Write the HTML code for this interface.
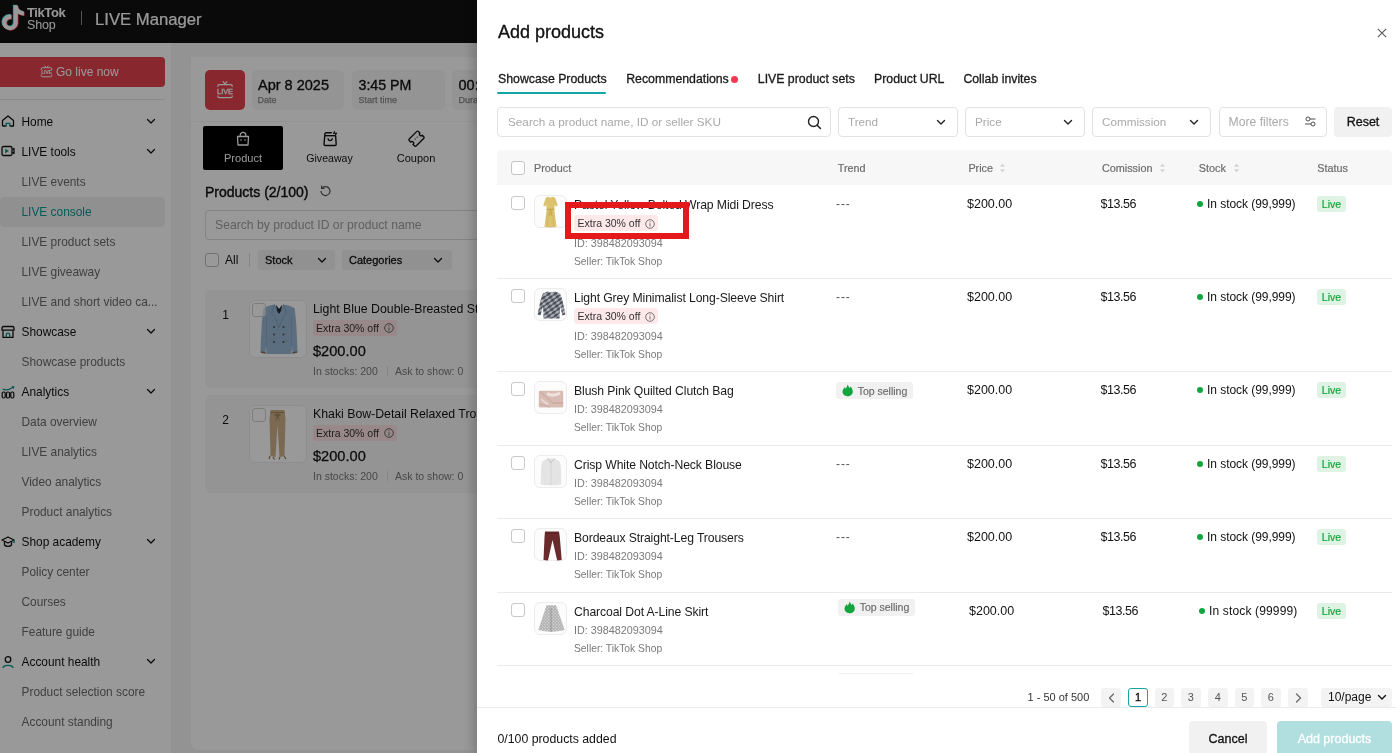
<!DOCTYPE html>
<html><head><meta charset="utf-8">
<style>
*{box-sizing:border-box;margin:0;padding:0}
html,body{width:1396px;height:753px;overflow:hidden;background:#f5f5f5;font-family:"Liberation Sans",sans-serif;color:#121212}
body{will-change:transform}
.a{position:absolute;white-space:nowrap}
.m{-webkit-text-stroke:0.25px currentColor}
.cb{position:absolute;width:14px;height:14px;border:1px solid #c8c8c8;border-radius:3px;background:#fff}
</style></head><body>
<div class="a" style="left:0px;top:0px;width:1396px;height:43px;background:#121212"></div><svg class="a" style="left:0px;top:4px;" width="26" height="28" viewBox="0 0 26 28" fill="none"><g transform="translate(0.6,1.2) scale(1.04)">
<path d="M12.525.02c1.31-.02 2.61-.01 3.91-.02.08 1.53.63 3.09 1.75 4.17 1.12 1.11 2.7 1.62 4.24 1.79v4.03c-1.44-.05-2.89-.35-4.2-.97-.57-.26-1.1-.59-1.62-.93-.01 2.92.01 5.840-.02 8.75-.08 1.4-.54 2.79-1.35 3.94-1.31 1.92-3.58 3.17-5.91 3.21-1.43.08-2.86-.31-4.08-1.03-2.020-1.19-3.440-3.370-3.650-5.710-.02-.5-.03-1-.01-1.49.18-1.9 1.12-3.72 2.58-4.96 1.66-1.44 3.98-2.13 6.15-1.72.02 1.48-.04 2.96-.04 4.44-.99-.32-2.15-.23-3.02.37-.63.41-1.11 1.04-1.36 1.75-.21.51-.15 1.07-.14 1.61.24 1.64 1.82 3.02 3.5 2.87 1.12-.01 2.19-.66 2.77-1.61.19-.33.4-.67.41-1.06.1-1.79.06-3.57.07-5.36.01-4.03-.01-8.05.02-12.07z" fill="#25f4ee" transform="translate(-0.7,-0.5)"/>
<path d="M12.525.02c1.31-.02 2.61-.01 3.91-.02.08 1.53.63 3.09 1.75 4.17 1.12 1.11 2.7 1.62 4.24 1.79v4.03c-1.44-.05-2.89-.35-4.2-.97-.57-.26-1.1-.59-1.62-.93-.01 2.92.01 5.840-.02 8.75-.08 1.4-.54 2.79-1.35 3.94-1.31 1.92-3.58 3.17-5.91 3.21-1.43.08-2.86-.31-4.08-1.03-2.020-1.19-3.440-3.370-3.650-5.710-.02-.5-.03-1-.01-1.49.18-1.9 1.12-3.72 2.58-4.96 1.66-1.44 3.98-2.13 6.15-1.72.02 1.48-.04 2.96-.04 4.44-.99-.32-2.15-.23-3.02.37-.63.41-1.11 1.04-1.36 1.75-.21.51-.15 1.07-.14 1.61.24 1.64 1.82 3.02 3.5 2.87 1.12-.01 2.19-.66 2.77-1.61.19-.33.4-.67.41-1.06.1-1.79.06-3.57.07-5.36.01-4.03-.01-8.05.02-12.07z" fill="#fe2c55" transform="translate(0.7,0.5)"/>
<path d="M12.525.02c1.31-.02 2.61-.01 3.91-.02.08 1.53.63 3.09 1.75 4.17 1.12 1.11 2.7 1.62 4.24 1.79v4.03c-1.44-.05-2.89-.35-4.2-.97-.57-.26-1.1-.59-1.62-.93-.01 2.92.01 5.840-.02 8.75-.08 1.4-.54 2.79-1.35 3.94-1.31 1.92-3.58 3.17-5.91 3.21-1.43.08-2.86-.31-4.08-1.03-2.020-1.19-3.440-3.370-3.650-5.710-.02-.5-.03-1-.01-1.49.18-1.9 1.12-3.72 2.58-4.96 1.66-1.44 3.98-2.13 6.15-1.72.02 1.48-.04 2.96-.04 4.44-.99-.32-2.15-.23-3.02.37-.63.41-1.11 1.04-1.36 1.75-.21.51-.15 1.07-.14 1.61.24 1.64 1.82 3.02 3.5 2.87 1.12-.01 2.19-.66 2.77-1.61.19-.33.4-.67.41-1.06.1-1.79.06-3.57.07-5.36.01-4.03-.01-8.05.02-12.07z" fill="#ffffff"/></g></svg><div class="a" style="left:27px;top:3.00px;height:20px;line-height:20px;font-size:13px;color:#fff;font-weight:bold;letter-spacing:-0.4px">TikTok</div><div class="a" style="left:27px;top:14.90px;height:20px;line-height:20px;font-size:12.5px;color:#fff;letter-spacing:-0.2px">Shop</div><div class="a" style="left:81px;top:11px;width:1px;height:14px;background:#8a8a8a"></div><div class="a" style="left:95px;top:9.70px;height:20px;line-height:20px;font-size:16.7px;color:#fff;-webkit-text-stroke:0.2px #fff">LIVE Manager</div><div class="a" style="left:0px;top:43px;width:171px;height:710px;background:#fff"></div><div class="a" style="left:-6px;top:56.5px;width:171px;height:30px;background:#e5424f;border-radius:4px"></div><svg class="a" style="left:39.5px;top:65px;" width="13" height="13" viewBox="0 0 13 13" fill="none"><g stroke="#fff" stroke-width="1" fill="none">
<path d="M4.5 0.8 L6.5 2.5 L8.5 0.8"/><path d="M1.2 5 V4.2 A1.5 1.5 0 0 1 2.7 2.7 H10.3 A1.5 1.5 0 0 1 11.8 4.2 V5 M1.2 9.5 V10.3 A1.5 1.5 0 0 0 2.7 11.8 H10.3 A1.5 1.5 0 0 0 11.8 10.3 V9.5"/>
</g><text x="6.5" y="9.3" font-size="5.2" font-weight="bold" fill="#fff" text-anchor="middle" font-family="Liberation Sans" letter-spacing="-0.2">LIVE</text></svg><div class="a" style="left:56px;top:61.50px;height:20px;line-height:20px;font-size:12px;color:#fff">Go live now</div><div class="a" style="left:0px;top:99px;width:165px;height:1px;background:#e6e6e6"></div><div class="a" style="left:21.5px;top:111.70px;height:20px;line-height:20px;font-size:11.9px;color:#121212">Home</div><svg class="a" style="left:146px;top:118.2px;" width="10" height="7" viewBox="0 0 10 7" fill="none"><path d="M1.5 1.5 L5 5 L8.5 1.5" stroke="#121212" stroke-width="1.3" stroke-linecap="round" stroke-linejoin="round"/></svg><svg class="a" style="left:1px;top:114.7px;" width="14" height="14" viewBox="0 0 14 14" fill="none"><path d="M1.5 11 V5.5 L7 1 L12.5 5.5 V11 H9 M5 11 H1.5" stroke="#121212" stroke-width="1.3" stroke-linejoin="round"/><path d="M5.2 11.5 V8.3 H8.8 V11.5" stroke="#0b8f8a" stroke-width="1.3"/></svg><div class="a" style="left:21.5px;top:141.70px;height:20px;line-height:20px;font-size:11.9px;color:#121212">LIVE tools</div><svg class="a" style="left:146px;top:148.2px;" width="10" height="7" viewBox="0 0 10 7" fill="none"><path d="M1.5 1.5 L5 5 L8.5 1.5" stroke="#121212" stroke-width="1.3" stroke-linecap="round" stroke-linejoin="round"/></svg><svg class="a" style="left:1px;top:144.7px;" width="14" height="14" viewBox="0 0 14 14" fill="none"><rect x="1" y="1.5" width="10" height="9" rx="1.5" stroke="#121212" stroke-width="1.3"/><path d="M11 4.5 L13 3.5 V8.5 L11 7.5" stroke="#121212" stroke-width="1.3" stroke-linejoin="round"/><path d="M4.2 3.8 L8 6 L4.2 8.2 Z" fill="#0b8f8a"/></svg><div class="a" style="left:21.5px;top:171.70px;height:20px;line-height:20px;font-size:11.9px;color:#6b6b6b">LIVE events</div><div class="a" style="left:0px;top:196.7px;width:165px;height:30px;background:#f0f0f0;border-radius:4px"></div><div class="a" style="left:21.5px;top:201.70px;height:20px;line-height:20px;font-size:11.9px;color:#0a9a94">LIVE console</div><div class="a" style="left:21.5px;top:231.70px;height:20px;line-height:20px;font-size:11.9px;color:#6b6b6b">LIVE product sets</div><div class="a" style="left:21.5px;top:261.70px;height:20px;line-height:20px;font-size:11.9px;color:#6b6b6b">LIVE giveaway</div><div class="a" style="left:21.5px;top:291.70px;height:20px;line-height:20px;font-size:11.9px;color:#6b6b6b">LIVE and short video ca...</div><div class="a" style="left:21.5px;top:321.70px;height:20px;line-height:20px;font-size:11.9px;color:#121212">Showcase</div><svg class="a" style="left:146px;top:328.2px;" width="10" height="7" viewBox="0 0 10 7" fill="none"><path d="M1.5 1.5 L5 5 L8.5 1.5" stroke="#121212" stroke-width="1.3" stroke-linecap="round" stroke-linejoin="round"/></svg><svg class="a" style="left:1px;top:324.7px;" width="14" height="14" viewBox="0 0 14 14" fill="none"><path d="M2 5.5 V12.3 H12 V5.5" stroke="#121212" stroke-width="1.3"/><path d="M2.5 1.5 H11.5 Q13 1.5 13 3 V5.2 H1 V3 Q1 1.5 2.5 1.5 Z" stroke="#121212" stroke-width="1.3" stroke-linejoin="round"/><path d="M5.3 12.3 V9.8 A1.7 1.7 0 0 1 8.7 9.8 V12.3" stroke="#0b8f8a" stroke-width="1.3"/></svg><div class="a" style="left:21.5px;top:351.70px;height:20px;line-height:20px;font-size:11.9px;color:#6b6b6b">Showcase products</div><div class="a" style="left:21.5px;top:381.70px;height:20px;line-height:20px;font-size:11.9px;color:#121212">Analytics</div><svg class="a" style="left:146px;top:388.2px;" width="10" height="7" viewBox="0 0 10 7" fill="none"><path d="M1.5 1.5 L5 5 L8.5 1.5" stroke="#121212" stroke-width="1.3" stroke-linecap="round" stroke-linejoin="round"/></svg><svg class="a" style="left:1px;top:384.7px;" width="14" height="14" viewBox="0 0 14 14" fill="none"><path d="M1.5 4 C5 6 8 5 12.5 2" stroke="#0b8f8a" stroke-width="1.3"/><path d="M11 1.3 L12.8 1.8 L12.3 3.6" stroke="#0b8f8a" stroke-width="1.1"/><rect x="1.2" y="7" width="3" height="6" rx="1.2" stroke="#121212" stroke-width="1.2"/><rect x="5.5" y="7" width="3" height="6" rx="1.2" stroke="#121212" stroke-width="1.2"/><rect x="9.8" y="7" width="3" height="6" rx="1.2" stroke="#121212" stroke-width="1.2"/></svg><div class="a" style="left:21.5px;top:411.70px;height:20px;line-height:20px;font-size:11.9px;color:#6b6b6b">Data overview</div><div class="a" style="left:21.5px;top:441.70px;height:20px;line-height:20px;font-size:11.9px;color:#6b6b6b">LIVE analytics</div><div class="a" style="left:21.5px;top:471.70px;height:20px;line-height:20px;font-size:11.9px;color:#6b6b6b">Video analytics</div><div class="a" style="left:21.5px;top:501.70px;height:20px;line-height:20px;font-size:11.9px;color:#6b6b6b">Product analytics</div><div class="a" style="left:21.5px;top:531.70px;height:20px;line-height:20px;font-size:11.9px;color:#121212">Shop academy</div><svg class="a" style="left:146px;top:538.2px;" width="10" height="7" viewBox="0 0 10 7" fill="none"><path d="M1.5 1.5 L5 5 L8.5 1.5" stroke="#121212" stroke-width="1.3" stroke-linecap="round" stroke-linejoin="round"/></svg><svg class="a" style="left:1px;top:534.7px;" width="14" height="14" viewBox="0 0 14 14" fill="none"><path d="M1 5 L7 2 L13 5 L7 8 Z" stroke="#121212" stroke-width="1.3" stroke-linejoin="round"/><path d="M3.5 6.5 V10 C5 11.8 9 11.8 10.5 10 V6.5" stroke="#121212" stroke-width="1.3"/><path d="M13 5 V8" stroke="#0b8f8a" stroke-width="1.5"/></svg><div class="a" style="left:21.5px;top:561.70px;height:20px;line-height:20px;font-size:11.9px;color:#6b6b6b">Policy center</div><div class="a" style="left:21.5px;top:591.70px;height:20px;line-height:20px;font-size:11.9px;color:#6b6b6b">Courses</div><div class="a" style="left:21.5px;top:621.70px;height:20px;line-height:20px;font-size:11.9px;color:#6b6b6b">Feature guide</div><div class="a" style="left:21.5px;top:651.70px;height:20px;line-height:20px;font-size:11.9px;color:#121212">Account health</div><svg class="a" style="left:146px;top:658.2px;" width="10" height="7" viewBox="0 0 10 7" fill="none"><path d="M1.5 1.5 L5 5 L8.5 1.5" stroke="#121212" stroke-width="1.3" stroke-linecap="round" stroke-linejoin="round"/></svg><svg class="a" style="left:1px;top:654.7px;" width="14" height="14" viewBox="0 0 14 14" fill="none"><circle cx="7" cy="4.5" r="2.8" stroke="#121212" stroke-width="1.3"/><path d="M2 13 C2.5 9.5 11.5 9.5 12 13" stroke="#0b8f8a" stroke-width="1.4"/></svg><div class="a" style="left:21.5px;top:681.70px;height:20px;line-height:20px;font-size:11.9px;color:#6b6b6b">Product selection score</div><div class="a" style="left:21.5px;top:711.70px;height:20px;line-height:20px;font-size:11.9px;color:#6b6b6b">Account standing</div><div class="a" style="left:171px;top:43px;width:306px;height:710px;background:#f5f5f5"></div><div class="a" style="left:191px;top:57px;width:290px;height:64px;background:#fff"></div><div class="a" style="left:205px;top:70px;width:40px;height:40px;background:#e5424f;border-radius:5px"></div><svg class="a" style="left:213px;top:78px;" width="24" height="24" viewBox="0 0 24 24" fill="none"><g stroke="#fff" stroke-width="1.25" fill="none">
<path d="M9.8 3.3 L12 5.8 L14.2 3.3"/><path d="M4.8 8.8 V8 A1.5 1.5 0 0 1 6.3 6.5 H17.7 A1.5 1.5 0 0 1 19.2 8 V8.8 M4.8 17.6 V18.2 A1.5 1.5 0 0 0 6.3 19.7 H17.7 A1.5 1.5 0 0 0 19.2 18.2 V17.6"/>
</g><text x="12" y="15.6" font-size="7.3" fill="#fff" text-anchor="middle" font-family="Liberation Sans" stroke="#fff" stroke-width="0.3">LIVE</text></svg><div class="a" style="left:252px;top:70px;width:92px;height:40px;background:#f7f7f7;border-radius:5px"></div><div class="a" style="left:258px;top:74.50px;height:20px;line-height:20px;font-size:14.5px;color:#121212;-webkit-text-stroke:0.35px #121212">Apr 8 2025</div><div class="a" style="left:257.5px;top:89.50px;height:20px;line-height:20px;font-size:9px;color:#8a8a8a;-webkit-text-stroke:0.25px #8a8a8a">Date</div><div class="a" style="left:352px;top:70px;width:93px;height:40px;background:#f7f7f7;border-radius:5px"></div><div class="a" style="left:358.5px;top:74.50px;height:20px;line-height:20px;font-size:14.2px;color:#121212;-webkit-text-stroke:0.35px #121212">3:45 PM</div><div class="a" style="left:358.5px;top:89.50px;height:20px;line-height:20px;font-size:9px;color:#8a8a8a;-webkit-text-stroke:0.25px #8a8a8a">Start time</div><div class="a" style="left:452px;top:70px;width:93px;height:40px;background:#f7f7f7;border-radius:5px"></div><div class="a" style="left:458.5px;top:74.50px;height:20px;line-height:20px;font-size:14.5px;color:#121212;-webkit-text-stroke:0.35px #121212">00:</div><div class="a" style="left:458.5px;top:89.50px;height:20px;line-height:20px;font-size:9px;color:#8a8a8a;-webkit-text-stroke:0.25px #8a8a8a">Duration</div><div class="a" style="left:191px;top:122px;width:290px;height:1px;background:#ececec"></div><div class="a" style="left:191px;top:122px;width:290px;height:51px;background:#fff"></div><div class="a" style="left:203px;top:126px;width:80px;height:44px;background:#000;border-radius:2px"></div><svg class="a" style="left:235px;top:131px;" width="16" height="16" viewBox="0 0 16 16" fill="none"><path d="M5.2 5.5 V4.2 A2.8 2.8 0 0 1 10.8 4.2 V5.5" stroke="#fff" stroke-width="1.3"/><path d="M2.5 5.5 H13.5 L13 14 H3 Z" stroke="#fff" stroke-width="1.3" stroke-linejoin="round"/><circle cx="6" cy="9" r="0.8" fill="#fff"/><circle cx="10" cy="9" r="0.8" fill="#fff"/></svg><div class="a" style="left:143.00px;width:200px;text-align:center;top:147.50px;height:20px;line-height:20px;font-size:11px;color:#fff">Product</div><svg class="a" style="left:321px;top:130px;" width="18" height="18" viewBox="0 0 18 18" fill="none"><path d="M3.8 5.5 L3 14.3 A1.2 1.2 0 0 0 4.2 15.5 H14 A1.2 1.2 0 0 0 15.2 14.3 L14.6 5.5" stroke="#121212" stroke-width="1.4" stroke-linejoin="round" fill="none"/><path d="M3.8 5.8 V4.2 A1.5 1.5 0 0 1 5.3 2.7 H10.8" stroke="#121212" stroke-width="1.4" fill="none"/><path d="M3.5 5.7 H14.8" stroke="#121212" stroke-width="1.4"/><path d="M7 8.3 C7.2 11.3 11 11.3 11.3 8.3" stroke="#121212" stroke-width="1.3" fill="none"/><path d="M13.6 1.3 L12.6 3.5 L15.6 3 L14.3 5.2" stroke="#121212" stroke-width="1.1" fill="none" stroke-linejoin="round"/></svg><div class="a" style="left:229.50px;width:200px;text-align:center;top:147.50px;height:20px;line-height:20px;font-size:10.6px;color:#121212">Giveaway</div><svg class="a" style="left:407px;top:130px;" width="18" height="18" viewBox="0 0 18 18" fill="none"><g transform="translate(9.5 8.7) rotate(-45)"><path d="M-5.1 -4.9 H5.1 A1.4 1.4 0 0 1 6.5 -3.5 V-1.7 A1.7 1.7 0 0 0 6.5 1.7 V3.5 A1.4 1.4 0 0 1 5.1 4.9 H-5.1 A1.4 1.4 0 0 1 -6.5 3.5 V1.7 A1.7 1.7 0 0 0 -6.5 -1.7 V-3.5 A1.4 1.4 0 0 1 -5.1 -4.9 Z" stroke="#121212" stroke-width="1.35" fill="none"/><circle cx="-1.2" cy="-0.6" r="0.65" fill="#121212"/><circle cx="1.6" cy="-0.6" r="0.65" fill="#121212"/></g></svg><div class="a" style="left:316.00px;width:200px;text-align:center;top:147.50px;height:20px;line-height:20px;font-size:11px;color:#121212">Coupon</div><div class="a" style="left:191px;top:173px;width:290px;height:577px;background:#fff;border-radius:0 0 0 8px"></div><div class="a" style="left:205px;top:181.50px;height:20px;line-height:20px;font-size:14px;color:#121212;-webkit-text-stroke:0.4px #121212">Products (2/100)</div><svg class="a" style="left:318px;top:184px;" width="14" height="14" viewBox="0 0 14 14" fill="none"><path d="M3 7 A4.5 4.5 0 1 0 4.4 3.8" stroke="#555" stroke-width="1.2"/><path d="M3.6 1.5 V4.3 H6.4" stroke="#555" stroke-width="1.2"/></svg><div class="a" style="left:205px;top:210px;width:290px;height:30px;background:#fff;border:1px solid #dcdcdc;border-radius:4px"></div><div class="a" style="left:215px;top:215.00px;height:20px;line-height:20px;font-size:12.2px;color:#a0a0a0">Search by product ID or product name</div><div class="cb" style="left:205px;top:253px;width:14px;height:14px;border-color:#bbb"></div><div class="a" style="left:225px;top:250.00px;height:20px;line-height:20px;font-size:12px;color:#121212">All</div><div class="a" style="left:249px;top:253px;width:1px;height:14px;background:#e0e0e0"></div><div class="a" style="left:258px;top:250px;width:77px;height:20px;background:#f2f2f2;border-radius:3px"></div><div class="a" style="left:265px;top:250.00px;height:20px;line-height:20px;font-size:11px;color:#121212;-webkit-text-stroke:0.3px #121212">Stock</div><svg class="a" style="left:317px;top:257px;" width="10" height="7" viewBox="0 0 10 7" fill="none"><path d="M1.5 1.5 L5 5 L8.5 1.5" stroke="#121212" stroke-width="1.3" stroke-linecap="round" stroke-linejoin="round"/></svg><div class="a" style="left:342px;top:250px;width:110px;height:20px;background:#f2f2f2;border-radius:3px"></div><div class="a" style="left:349px;top:250.00px;height:20px;line-height:20px;font-size:11px;color:#121212;-webkit-text-stroke:0.3px #121212">Categories</div><svg class="a" style="left:433px;top:257px;" width="10" height="7" viewBox="0 0 10 7" fill="none"><path d="M1.5 1.5 L5 5 L8.5 1.5" stroke="#121212" stroke-width="1.3" stroke-linecap="round" stroke-linejoin="round"/></svg><div class="a" style="left:205px;top:290px;width:290px;height:98px;background:#f7f7f7;border-radius:5px"></div><div class="a" style="left:215.50px;width:20px;text-align:center;top:305.00px;height:20px;line-height:20px;font-size:12px;color:#121212">1</div><div class="a" style="left:248.5px;top:300px;width:58px;height:58px;background:#fff;border:1px solid #ececec;border-radius:6px"></div><svg class="a" style="left:259.5px;top:303.5px" width="38" height="51" viewBox="0 0 38 51"><path d="M9.5 1.5 L14.5 0.5 L19 5 L23.5 0.5 L28.5 1.5 L34.5 4 Q36.5 15 37.5 48.5 L32.5 49.5 L32 42 L31.5 50 H6.5 L6 42 L5.5 49.5 L0.5 48.5 Q1.5 15 3.5 4 Z" fill="#98b8d4"/><path d="M16 0.8 L19 5 L22 0.8 L21 7 L19 10 L17 7 Z" fill="#2a2c33"/><path d="M14.5 0.5 L11.5 9 L15 13 L19 24 L23 13 L26.5 9 L23.5 0.5" stroke="#7f9cb6" stroke-width="0.8" fill="none"/><path d="M6.5 12 L6.5 42 M31.5 12 L31.5 42" stroke="#86a3bc" stroke-width="0.7"/><path d="M9.5 37 H15.5 M22.5 37 H28.5" stroke="#86a3bc" stroke-width="0.7"/><path d="M1 48 L5.5 49 M32.5 49 L37 48" stroke="#8a6a58" stroke-width="1.6"/><circle cx="14" cy="23" r="0.95" fill="#4a4a50"/><circle cx="23.5" cy="23" r="0.95" fill="#4a4a50"/><circle cx="14" cy="30.5" r="0.95" fill="#4a4a50"/><circle cx="23.5" cy="30.5" r="0.95" fill="#4a4a50"/><circle cx="14" cy="38" r="0.95" fill="#4a4a50"/><circle cx="23.5" cy="38" r="0.95" fill="#4a4a50"/></svg><div class="cb" style="left:252px;top:303px;border-color:#cfcfcf;background:rgba(255,255,255,0.6)"></div><div class="a" style="left:313px;top:298.50px;height:20px;line-height:20px;font-size:12.3px;color:#121212">Light Blue Double-Breasted Structured Blazer</div><div class="a" style="left:313px;top:320px;width:84px;height:16px;background:#fde3e6;border-radius:3px"></div><div class="a" style="left:316px;top:318.00px;height:20px;line-height:20px;font-size:10.5px;color:#333">Extra 30% off</div><svg class="a" style="left:384px;top:323px;" width="10" height="10" viewBox="0 0 10 10" fill="none"><circle cx="5" cy="5" r="4.3" stroke="#555" stroke-width="0.9"/><path d="M5 4.3 V7.5" stroke="#555" stroke-width="0.9"/><circle cx="5" cy="2.8" r="0.55" fill="#555"/></svg><div class="a" style="left:313px;top:340.50px;height:20px;line-height:20px;font-size:14.6px;color:#121212;-webkit-text-stroke:0.25px #121212">$200.00</div><div class="a" style="left:313px;top:361.00px;height:20px;line-height:20px;font-size:10.5px;color:#777">In stocks: 200</div><div class="a" style="left:387px;top:366px;width:1px;height:10px;background:#dcdcdc"></div><div class="a" style="left:395px;top:361.00px;height:20px;line-height:20px;font-size:10.5px;color:#777">Ask to show: 0</div><div class="a" style="left:205px;top:395px;width:290px;height:98px;background:#f7f7f7;border-radius:5px"></div><div class="a" style="left:215.50px;width:20px;text-align:center;top:410.00px;height:20px;line-height:20px;font-size:12px;color:#121212">2</div><div class="a" style="left:248.5px;top:405px;width:58px;height:58px;background:#fff;border:1px solid #ececec;border-radius:6px"></div><svg class="a" style="left:268px;top:409px" width="19" height="51" viewBox="0 0 19 51"><path d="M2.5 1 H16.5 L17.5 10 L16.5 47 L11.5 48 L9.5 16 L7.5 48 L2.5 47 L1.5 10 Z" fill="#cdb089"/><path d="M2.5 3.5 H16.5" stroke="#a88c62" stroke-width="1.2"/><path d="M6 6 L9.5 4 L13 6 L10.5 8 L12 13 L9.5 9 L7 13 L8.5 8 Z" fill="#a88c62"/><path d="M2 47 L1 50 M5 48 L6.5 50.5 M12 48 L11 50.5 M16 47 L18 50" stroke="#8f7048" stroke-width="1.1"/></svg><div class="cb" style="left:252px;top:408px;border-color:#cfcfcf;background:rgba(255,255,255,0.6)"></div><div class="a" style="left:313px;top:403.50px;height:20px;line-height:20px;font-size:12.3px;color:#121212">Khaki Bow-Detail Relaxed Trousers</div><div class="a" style="left:313px;top:425px;width:84px;height:16px;background:#fde3e6;border-radius:3px"></div><div class="a" style="left:316px;top:423.00px;height:20px;line-height:20px;font-size:10.5px;color:#333">Extra 30% off</div><svg class="a" style="left:384px;top:428px;" width="10" height="10" viewBox="0 0 10 10" fill="none"><circle cx="5" cy="5" r="4.3" stroke="#555" stroke-width="0.9"/><path d="M5 4.3 V7.5" stroke="#555" stroke-width="0.9"/><circle cx="5" cy="2.8" r="0.55" fill="#555"/></svg><div class="a" style="left:313px;top:445.50px;height:20px;line-height:20px;font-size:14.6px;color:#121212;-webkit-text-stroke:0.25px #121212">$200.00</div><div class="a" style="left:313px;top:466.00px;height:20px;line-height:20px;font-size:10.5px;color:#777">In stocks: 200</div><div class="a" style="left:387px;top:471px;width:1px;height:10px;background:#dcdcdc"></div><div class="a" style="left:395px;top:466.00px;height:20px;line-height:20px;font-size:10.5px;color:#777">Ask to show: 0</div><div class="a" style="left:0px;top:0px;width:1396px;height:753px;background:rgba(0,0,0,0.4)"></div><div class="a" style="left:477px;top:0px;width:919px;height:753px;background:#fff;box-shadow:-4px 0 10px rgba(0,0,0,0.2)"></div><div class="a" style="left:498px;top:22.00px;height:20px;line-height:20px;font-size:18px;color:#121212;-webkit-text-stroke:0.35px #121212">Add products</div><svg class="a" style="left:1376.5px;top:27.5px;" width="10" height="10" viewBox="0 0 10 10" fill="none"><path d="M0.8 0.8 L9.2 9.2 M9.2 0.8 L0.8 9.2" stroke="#555" stroke-width="1.05"/></svg><div class="a" style="left:498px;top:68.90px;height:20px;line-height:20px;font-size:12.3px;color:#1a1a1a;-webkit-text-stroke:0.3px #1a1a1a">Showcase Products</div><div class="a" style="left:626.2px;top:68.90px;height:20px;line-height:20px;font-size:12.3px;color:#1a1a1a;-webkit-text-stroke:0.3px #1a1a1a">Recommendations</div><div class="a" style="left:757.8px;top:68.90px;height:20px;line-height:20px;font-size:12.3px;color:#1a1a1a;-webkit-text-stroke:0.3px #1a1a1a">LIVE product sets</div><div class="a" style="left:874px;top:68.90px;height:20px;line-height:20px;font-size:12.3px;color:#1a1a1a;-webkit-text-stroke:0.3px #1a1a1a">Product URL</div><div class="a" style="left:963.4px;top:68.90px;height:20px;line-height:20px;font-size:12.3px;color:#1a1a1a;-webkit-text-stroke:0.3px #1a1a1a">Collab invites</div><div class="a" style="left:730.7px;top:75.5px;width:7px;height:7px;border-radius:50%;background:#f0384f"></div><div class="a" style="left:497px;top:91.5px;width:109px;height:2px;background:#12a6a6;border-radius:1px"></div><div class="a" style="left:497px;top:107px;width:334px;height:30px;background:#fff;border:1px solid #e2e2e2;border-radius:4px"></div><div class="a" style="left:508px;top:112.00px;height:20px;line-height:20px;font-size:11.75px;color:#a9a9a9">Search a product name, ID or seller SKU</div><svg class="a" style="left:807px;top:115px;" width="15" height="15" viewBox="0 0 15 15" fill="none"><circle cx="6.5" cy="6.5" r="5" stroke="#222" stroke-width="1.4"/><path d="M10.2 10.2 L13.5 13.5" stroke="#222" stroke-width="1.5" stroke-linecap="round"/></svg><div class="a" style="left:838px;top:107px;width:120px;height:30px;background:#fff;border:1px solid #e2e2e2;border-radius:4px"></div><div class="a" style="left:848px;top:112.00px;height:20px;line-height:20px;font-size:11.7px;color:#a9a9a9">Trend</div><svg class="a" style="left:936px;top:118.5px;" width="10" height="7" viewBox="0 0 10 7" fill="none"><path d="M1.5 1.5 L5 5 L8.5 1.5" stroke="#222" stroke-width="1.4" stroke-linecap="round" stroke-linejoin="round"/></svg><div class="a" style="left:965px;top:107px;width:120px;height:30px;background:#fff;border:1px solid #e2e2e2;border-radius:4px"></div><div class="a" style="left:975px;top:112.00px;height:20px;line-height:20px;font-size:11.7px;color:#a9a9a9">Price</div><svg class="a" style="left:1063px;top:118.5px;" width="10" height="7" viewBox="0 0 10 7" fill="none"><path d="M1.5 1.5 L5 5 L8.5 1.5" stroke="#222" stroke-width="1.4" stroke-linecap="round" stroke-linejoin="round"/></svg><div class="a" style="left:1092px;top:107px;width:119px;height:30px;background:#fff;border:1px solid #e2e2e2;border-radius:4px"></div><div class="a" style="left:1102px;top:112.00px;height:20px;line-height:20px;font-size:11.7px;color:#a9a9a9">Commission</div><svg class="a" style="left:1189px;top:118.5px;" width="10" height="7" viewBox="0 0 10 7" fill="none"><path d="M1.5 1.5 L5 5 L8.5 1.5" stroke="#222" stroke-width="1.4" stroke-linecap="round" stroke-linejoin="round"/></svg><div class="a" style="left:1219px;top:107px;width:107.5px;height:30px;background:#fff;border:1px solid #e2e2e2;border-radius:4px"></div><div class="a" style="left:1228.5px;top:112.00px;height:20px;line-height:20px;font-size:12.2px;color:#a9a9a9">More filters</div><svg class="a" style="left:1304px;top:115px;" width="13" height="13" viewBox="0 0 13 13" fill="none"><circle cx="4" cy="4" r="2" stroke="#444" stroke-width="0.95"/><path d="M6 4 H11.5" stroke="#444" stroke-width="0.95"/><circle cx="9" cy="9" r="2" stroke="#444" stroke-width="0.95"/><path d="M1 9 H7" stroke="#444" stroke-width="0.95"/></svg><div class="a" style="left:1334px;top:107px;width:58px;height:30px;background:#f1f1f1;border-radius:4px"></div><div class="a" style="left:1334.00px;width:58px;text-align:center;top:112.00px;height:20px;line-height:20px;font-size:12.5px;color:#121212;-webkit-text-stroke:0.3px #121212">Reset</div><div class="a" style="left:497px;top:150px;width:895px;height:35px;background:#f7f7f7;border-radius:4px 4px 0 0"></div><div class="cb" style="left:510.5px;top:161px;border-color:#c4c4c4"></div><div class="a" style="left:534px;top:158.00px;height:20px;line-height:20px;font-size:10.8px;color:#6d6d6d;-webkit-text-stroke:0.2px #6d6d6d">Product</div><div class="a" style="left:837.8px;top:158.00px;height:20px;line-height:20px;font-size:10.8px;color:#6d6d6d;-webkit-text-stroke:0.2px #6d6d6d">Trend</div><div class="a" style="left:968.4px;top:158.00px;height:20px;line-height:20px;font-size:10.8px;color:#6d6d6d;-webkit-text-stroke:0.2px #6d6d6d">Price</div><svg class="a" style="left:999.2px;top:163px;" width="7" height="10" viewBox="0 0 7 10" fill="none"><path d="M1 3.5 L3.5 1 L6 3.5 Z M1 6.5 L3.5 9 L6 6.5 Z" fill="#c9c9c9"/></svg><div class="a" style="left:1102px;top:158.00px;height:20px;line-height:20px;font-size:10.8px;color:#6d6d6d;-webkit-text-stroke:0.2px #6d6d6d">Comission</div><svg class="a" style="left:1158.5px;top:163px;" width="7" height="10" viewBox="0 0 7 10" fill="none"><path d="M1 3.5 L3.5 1 L6 3.5 Z M1 6.5 L3.5 9 L6 6.5 Z" fill="#c9c9c9"/></svg><div class="a" style="left:1198.8px;top:158.00px;height:20px;line-height:20px;font-size:10.8px;color:#6d6d6d;-webkit-text-stroke:0.2px #6d6d6d">Stock</div><svg class="a" style="left:1233px;top:163px;" width="7" height="10" viewBox="0 0 7 10" fill="none"><path d="M1 3.5 L3.5 1 L6 3.5 Z M1 6.5 L3.5 9 L6 6.5 Z" fill="#c9c9c9"/></svg><div class="a" style="left:1317.2px;top:158.00px;height:20px;line-height:20px;font-size:10.8px;color:#6d6d6d;-webkit-text-stroke:0.2px #6d6d6d">Status</div><div class="cb" style="left:510.5px;top:196px"></div><div class="a" style="left:534px;top:195px;width:33px;height:33px;background:#fcfcfc;border:1px solid #ececec;border-radius:6px"></div><svg class="a" style="left:542px;top:196px" width="17" height="32" viewBox="0 0 17 32"><path d="M6 0.8 Q8.5 2.2 11 0.8 L13.3 2 L15.8 9.5 L13.8 10.5 L12.8 8.5 L12.3 13.5 L14.5 30.8 Q8.5 32 2.5 30.8 L4.7 13.5 L4.2 8.5 L3.2 10.5 L1.2 9.5 L3.7 2 Z" fill="#dcc26e"/><path d="M4.7 13.3 H12.3" stroke="#bda14f" stroke-width="1.1"/><path d="M8.5 13.3 L7.4 20 M8.5 13.3 L9.8 19.5" stroke="#bda14f" stroke-width="0.9"/><path d="M6.5 15 L5.2 30 M10.5 15 L11.8 30" stroke="#cdb05a" stroke-width="0.6"/></svg><div class="a" style="left:574px;top:194.80px;height:20px;line-height:20px;font-size:12.2px;color:#1a1a1a;letter-spacing:-0.1px">Pastel Yellow Belted Wrap Midi Dress</div><div class="a" style="left:574px;top:215px;width:84px;height:16px;background:#fde8ea;border-radius:3px"></div><div class="a" style="left:577.5px;top:213.30px;height:20px;line-height:20px;font-size:10.5px;color:#333">Extra 30% off</div><svg class="a" style="left:644.5px;top:218.5px;" width="10" height="10" viewBox="0 0 10 10" fill="none"><circle cx="5" cy="5" r="4.3" stroke="#666" stroke-width="0.9"/><path d="M5 4.3 V7.5" stroke="#666" stroke-width="0.9"/><circle cx="5" cy="2.8" r="0.55" fill="#666"/></svg><div class="a" style="left:574px;top:233.00px;height:20px;line-height:20px;font-size:10.8px;color:#7a7a7a">ID: 398482093094</div><div class="a" style="left:574px;top:251.50px;height:20px;line-height:20px;font-size:10.3px;color:#7a7a7a">Seller: TikTok Shop</div><div class="a" style="left:836px;top:194.00px;height:20px;line-height:20px;font-size:12px;color:#555;letter-spacing:0.9px">---</div><div class="a" style="left:967px;top:194.00px;height:20px;line-height:20px;font-size:12.5px;color:#121212">$200.00</div><div class="a" style="left:1100.6px;top:194.00px;height:20px;line-height:20px;font-size:12.5px;color:#121212;letter-spacing:-0.45px">$13.56</div><div class="a" style="left:1196.8px;top:200.8px;width:6.4px;height:6.4px;border-radius:50%;background:#13a53d"></div><div class="a" style="left:1207px;top:194.00px;height:20px;line-height:20px;font-size:12px;color:#121212;letter-spacing:-0.05px">In stock (99,999)</div><div class="a" style="left:1317px;top:195.5px;width:29px;height:16.5px;background:#dff3e5;border-radius:3px"></div><div class="a" style="left:1317.00px;width:29px;text-align:center;top:193.80px;height:20px;line-height:20px;font-size:10.5px;color:#13a53d;-webkit-text-stroke:0.2px #13a53d">Live</div><div class="a" style="left:497px;top:278px;width:895px;height:1px;background:#ebebeb"></div><div class="cb" style="left:510.5px;top:289px"></div><div class="a" style="left:534px;top:288px;width:33px;height:33px;background:#fcfcfc;border:1px solid #ececec;border-radius:6px"></div><svg class="a" style="left:536.5px;top:291px" width="29" height="28" viewBox="0 0 29 28"><defs><pattern id="zb" width="6" height="3.6" patternUnits="userSpaceOnUse" patternTransform="rotate(-35)"><rect width="6" height="3.6" fill="#b4b7be"/><path d="M0 1 Q1.5 0 3 1 T6 1 V2.9 Q4.5 1.9 3 2.9 T0 2.9 Z" fill="#474c56"/></pattern></defs><path d="M10.5 0.5 L14.5 1.5 L18.5 0.5 L23 2.5 Q25 6 26 12 L28.5 23.5 L25.5 24.5 L23 15 L22.5 27.5 H6.5 L6 15 L3.5 24.5 L0.5 23.5 L3 12 Q4 6 6 2.5 Z" fill="url(#zb)"/></svg><div class="a" style="left:574px;top:287.80px;height:20px;line-height:20px;font-size:12.2px;color:#1a1a1a;letter-spacing:-0.1px">Light Grey Minimalist Long-Sleeve Shirt</div><div class="a" style="left:574px;top:308px;width:84px;height:16px;background:#fde8ea;border-radius:3px"></div><div class="a" style="left:577.5px;top:306.30px;height:20px;line-height:20px;font-size:10.5px;color:#333">Extra 30% off</div><svg class="a" style="left:644.5px;top:311.5px;" width="10" height="10" viewBox="0 0 10 10" fill="none"><circle cx="5" cy="5" r="4.3" stroke="#666" stroke-width="0.9"/><path d="M5 4.3 V7.5" stroke="#666" stroke-width="0.9"/><circle cx="5" cy="2.8" r="0.55" fill="#666"/></svg><div class="a" style="left:574px;top:326.00px;height:20px;line-height:20px;font-size:10.8px;color:#7a7a7a">ID: 398482093094</div><div class="a" style="left:574px;top:344.50px;height:20px;line-height:20px;font-size:10.3px;color:#7a7a7a">Seller: TikTok Shop</div><div class="a" style="left:836px;top:287.00px;height:20px;line-height:20px;font-size:12px;color:#555;letter-spacing:0.9px">---</div><div class="a" style="left:967px;top:287.00px;height:20px;line-height:20px;font-size:12.5px;color:#121212">$200.00</div><div class="a" style="left:1100.6px;top:287.00px;height:20px;line-height:20px;font-size:12.5px;color:#121212;letter-spacing:-0.45px">$13.56</div><div class="a" style="left:1196.8px;top:293.8px;width:6.4px;height:6.4px;border-radius:50%;background:#13a53d"></div><div class="a" style="left:1207px;top:287.00px;height:20px;line-height:20px;font-size:12px;color:#121212;letter-spacing:-0.05px">In stock (99,999)</div><div class="a" style="left:1317px;top:288.5px;width:29px;height:16.5px;background:#dff3e5;border-radius:3px"></div><div class="a" style="left:1317.00px;width:29px;text-align:center;top:286.80px;height:20px;line-height:20px;font-size:10.5px;color:#13a53d;-webkit-text-stroke:0.2px #13a53d">Live</div><div class="a" style="left:497px;top:371px;width:895px;height:1px;background:#ebebeb"></div><div class="cb" style="left:510.5px;top:382px"></div><div class="a" style="left:534px;top:381px;width:33px;height:33px;background:#fcfcfc;border:1px solid #ececec;border-radius:6px"></div><svg class="a" style="left:538px;top:390px" width="26" height="18" viewBox="0 0 26 18"><path d="M0.8 2 Q1 0.8 2.5 0.8 H23.5 Q25 0.8 25.2 2 L25.3 16.5 Q25 17.5 23.5 17.5 H2.5 Q1 17.5 0.8 16.5 Z" fill="#d8bcb4"/><path d="M2 1.5 L15 13 H25" stroke="#bf9c93" stroke-width="0.8" fill="none"/><path d="M9 3.5 Q15 7 22 3" stroke="#eee0dc" stroke-width="3" fill="none"/><path d="M3 9 Q6 12 10 14" stroke="#e8d6d1" stroke-width="2" fill="none"/><path d="M1 14 L12 17" stroke="#c9a9a0" stroke-width="1.2"/></svg><div class="a" style="left:574px;top:380.80px;height:20px;line-height:20px;font-size:12.2px;color:#1a1a1a;letter-spacing:-0.1px">Blush Pink Quilted Clutch Bag</div><div class="a" style="left:574px;top:399.30px;height:20px;line-height:20px;font-size:10.8px;color:#7a7a7a">ID: 398482093094</div><div class="a" style="left:574px;top:417.80px;height:20px;line-height:20px;font-size:10.3px;color:#7a7a7a">Seller: TikTok Shop</div><div class="a" style="left:836px;top:382px;width:77px;height:17px;background:#f1f1f1;border-radius:3px"></div><svg class="a" style="left:842px;top:384px;" width="11.5" height="13" viewBox="0 0 11.5 13" fill="none"><path d="M5.5 0.5 C6.2 2.2 7.2 2.8 7.6 4.2 C8 3.7 8.3 3.1 8.3 2.4 C9.8 3.8 10.8 5.6 10.8 7.4 C10.8 10.4 8.5 12.2 5.6 12.2 C2.7 12.2 0.5 10.4 0.5 7.6 C0.5 5.4 2 4.3 3 2.7 C3.3 3.5 3.4 4.2 3.2 5 C4.5 3.8 5.3 2.4 5.5 0.5 Z" fill="#13a53d"/></svg><div class="a" style="left:857.7px;top:380.50px;height:20px;line-height:20px;font-size:10.5px;color:#6a6a6a;-webkit-text-stroke:0.15px #6a6a6a">Top selling</div><div class="a" style="left:967px;top:380.00px;height:20px;line-height:20px;font-size:12.5px;color:#121212">$200.00</div><div class="a" style="left:1100.6px;top:380.00px;height:20px;line-height:20px;font-size:12.5px;color:#121212;letter-spacing:-0.45px">$13.56</div><div class="a" style="left:1196.8px;top:386.8px;width:6.4px;height:6.4px;border-radius:50%;background:#13a53d"></div><div class="a" style="left:1207px;top:380.00px;height:20px;line-height:20px;font-size:12px;color:#121212;letter-spacing:-0.05px">In stock (99,999)</div><div class="a" style="left:1317px;top:381.5px;width:29px;height:16.5px;background:#dff3e5;border-radius:3px"></div><div class="a" style="left:1317.00px;width:29px;text-align:center;top:379.80px;height:20px;line-height:20px;font-size:10.5px;color:#13a53d;-webkit-text-stroke:0.2px #13a53d">Live</div><div class="a" style="left:497px;top:445px;width:895px;height:1px;background:#ebebeb"></div><div class="cb" style="left:510.5px;top:456px"></div><div class="a" style="left:534px;top:455px;width:33px;height:33px;background:#fcfcfc;border:1px solid #ececec;border-radius:6px"></div><svg class="a" style="left:540px;top:458px" width="22" height="28" viewBox="0 0 22 28"><path d="M7.5 0.5 H14.5 L19 3 Q20.8 5 21 12 L21.3 26.5 L19 26.8 L18.2 13 L18.2 27.2 H3.8 L3.8 13 L3 26.8 L0.7 26.5 L1 12 Q1.2 5 3 3 Z" fill="#e4e4e4"/><path d="M11 3 V27" stroke="#cfcfcf" stroke-width="0.7"/><path d="M7.5 0.5 L11 4.5 L14.5 0.5" stroke="#bdbdbd" stroke-width="0.9" fill="none"/><path d="M3.8 13 V27 M18.2 13 V27" stroke="#d6d6d6" stroke-width="0.6"/></svg><div class="a" style="left:574px;top:454.80px;height:20px;line-height:20px;font-size:12.2px;color:#1a1a1a;letter-spacing:-0.1px">Crisp White Notch-Neck Blouse</div><div class="a" style="left:574px;top:473.30px;height:20px;line-height:20px;font-size:10.8px;color:#7a7a7a">ID: 398482093094</div><div class="a" style="left:574px;top:491.80px;height:20px;line-height:20px;font-size:10.3px;color:#7a7a7a">Seller: TikTok Shop</div><div class="a" style="left:836px;top:454.00px;height:20px;line-height:20px;font-size:12px;color:#555;letter-spacing:0.9px">---</div><div class="a" style="left:967px;top:454.00px;height:20px;line-height:20px;font-size:12.5px;color:#121212">$200.00</div><div class="a" style="left:1100.6px;top:454.00px;height:20px;line-height:20px;font-size:12.5px;color:#121212;letter-spacing:-0.45px">$13.56</div><div class="a" style="left:1196.8px;top:460.8px;width:6.4px;height:6.4px;border-radius:50%;background:#13a53d"></div><div class="a" style="left:1207px;top:454.00px;height:20px;line-height:20px;font-size:12px;color:#121212;letter-spacing:-0.05px">In stock (99,999)</div><div class="a" style="left:1317px;top:455.5px;width:29px;height:16.5px;background:#dff3e5;border-radius:3px"></div><div class="a" style="left:1317.00px;width:29px;text-align:center;top:453.80px;height:20px;line-height:20px;font-size:10.5px;color:#13a53d;-webkit-text-stroke:0.2px #13a53d">Live</div><div class="a" style="left:497px;top:518px;width:895px;height:1px;background:#ebebeb"></div><div class="cb" style="left:510.5px;top:529px"></div><div class="a" style="left:534px;top:528px;width:33px;height:33px;background:#fcfcfc;border:1px solid #ececec;border-radius:6px"></div><svg class="a" style="left:542.5px;top:530.8px" width="19" height="30" viewBox="0 0 19 30"><path d="M2 0.5 H16 L16.8 6 L18.7 29 L14.2 29.5 L9.5 9 L5 29.5 L0.5 29 L1.5 6 Z" fill="#6a2a2c"/><path d="M2 2 H16" stroke="#521d20" stroke-width="0.9"/></svg><div class="a" style="left:574px;top:527.80px;height:20px;line-height:20px;font-size:12.2px;color:#1a1a1a;letter-spacing:-0.1px">Bordeaux Straight-Leg Trousers</div><div class="a" style="left:574px;top:546.30px;height:20px;line-height:20px;font-size:10.8px;color:#7a7a7a">ID: 398482093094</div><div class="a" style="left:574px;top:564.80px;height:20px;line-height:20px;font-size:10.3px;color:#7a7a7a">Seller: TikTok Shop</div><div class="a" style="left:836px;top:527.00px;height:20px;line-height:20px;font-size:12px;color:#555;letter-spacing:0.9px">---</div><div class="a" style="left:967px;top:527.00px;height:20px;line-height:20px;font-size:12.5px;color:#121212">$200.00</div><div class="a" style="left:1100.6px;top:527.00px;height:20px;line-height:20px;font-size:12.5px;color:#121212;letter-spacing:-0.45px">$13.56</div><div class="a" style="left:1196.8px;top:533.8px;width:6.4px;height:6.4px;border-radius:50%;background:#13a53d"></div><div class="a" style="left:1207px;top:527.00px;height:20px;line-height:20px;font-size:12px;color:#121212;letter-spacing:-0.05px">In stock (99,999)</div><div class="a" style="left:1317px;top:528.5px;width:29px;height:16.5px;background:#dff3e5;border-radius:3px"></div><div class="a" style="left:1317.00px;width:29px;text-align:center;top:526.80px;height:20px;line-height:20px;font-size:10.5px;color:#13a53d;-webkit-text-stroke:0.2px #13a53d">Live</div><div class="a" style="left:497px;top:592px;width:895px;height:1px;background:#ebebeb"></div><div class="cb" style="left:510.5px;top:603px"></div><div class="a" style="left:534px;top:602px;width:33px;height:33px;background:#fcfcfc;border:1px solid #ececec;border-radius:6px"></div><svg class="a" style="left:537.5px;top:604.7px" width="27" height="28" viewBox="0 0 27 28"><defs><pattern id="dt" width="2.2" height="2.2" patternUnits="userSpaceOnUse" patternTransform="rotate(45)"><rect width="2.2" height="2.2" fill="#b0b0b0"/><rect width="1.1" height="1.1" fill="#e2e2e2"/></pattern></defs><path d="M8.5 0.3 H18 L26.7 25 Q13.5 28.5 0.3 25 Z" fill="url(#dt)"/><path d="M13 3 V27" stroke="#8e8e8e" stroke-width="0.8"/></svg><div class="a" style="left:574px;top:601.80px;height:20px;line-height:20px;font-size:12.2px;color:#1a1a1a;letter-spacing:-0.1px">Charcoal Dot A-Line Skirt</div><div class="a" style="left:574px;top:620.30px;height:20px;line-height:20px;font-size:10.8px;color:#7a7a7a">ID: 398482093094</div><div class="a" style="left:574px;top:638.80px;height:20px;line-height:20px;font-size:10.3px;color:#7a7a7a">Seller: TikTok Shop</div><div class="a" style="left:838px;top:598.5px;width:77px;height:17px;background:#f1f1f1;border-radius:3px"></div><svg class="a" style="left:844px;top:600.5px;" width="11.5" height="13" viewBox="0 0 11.5 13" fill="none"><path d="M5.5 0.5 C6.2 2.2 7.2 2.8 7.6 4.2 C8 3.7 8.3 3.1 8.3 2.4 C9.8 3.8 10.8 5.6 10.8 7.4 C10.8 10.4 8.5 12.2 5.6 12.2 C2.7 12.2 0.5 10.4 0.5 7.6 C0.5 5.4 2 4.3 3 2.7 C3.3 3.5 3.4 4.2 3.2 5 C4.5 3.8 5.3 2.4 5.5 0.5 Z" fill="#13a53d"/></svg><div class="a" style="left:859.7px;top:597.00px;height:20px;line-height:20px;font-size:10.5px;color:#6a6a6a;-webkit-text-stroke:0.15px #6a6a6a">Top selling</div><div class="a" style="left:969px;top:601.00px;height:20px;line-height:20px;font-size:12.5px;color:#121212">$200.00</div><div class="a" style="left:1102.6px;top:601.00px;height:20px;line-height:20px;font-size:12.5px;color:#121212;letter-spacing:-0.45px">$13.56</div><div class="a" style="left:1198.8px;top:607.8px;width:6.4px;height:6.4px;border-radius:50%;background:#13a53d"></div><div class="a" style="left:1209px;top:601.00px;height:20px;line-height:20px;font-size:12px;color:#121212;letter-spacing:0.15px">In stock (99999)</div><div class="a" style="left:1317px;top:602.5px;width:29px;height:16.5px;background:#dff3e5;border-radius:3px"></div><div class="a" style="left:1317.00px;width:29px;text-align:center;top:600.80px;height:20px;line-height:20px;font-size:10.5px;color:#13a53d;-webkit-text-stroke:0.2px #13a53d">Live</div><div class="a" style="left:497px;top:665px;width:895px;height:1px;background:#ebebeb"></div><div class="a" style="left:838px;top:673px;width:76px;height:1px;background:#f3f3f3"></div><div class="a" style="left:1027.5px;top:687.20px;height:20px;line-height:20px;font-size:11px;color:#333">1 - 50 of 500</div><div class="a" style="left:1101.3px;top:687.5px;width:19.5px;height:19.5px;background:#f3f3f3;border-radius:3px"></div><svg class="a" style="left:1107.8px;top:692.5px;" width="7" height="10" viewBox="0 0 7 10" fill="none"><path d="M5.5 1 L1.5 5 L5.5 9" stroke="#666" stroke-width="1.2" stroke-linecap="round" stroke-linejoin="round"/></svg><div class="a" style="left:1128.2px;top:687.5px;width:19.5px;height:19.5px;background:#fff;border:1.2px solid #1aa3a3;border-radius:3px"></div><div class="a" style="left:1127.95px;width:20px;text-align:center;top:687.20px;height:20px;line-height:20px;font-size:11px;color:#121212;-webkit-text-stroke:0.35px #121212">1</div><div class="a" style="left:1154.6px;top:687.5px;width:19.5px;height:19.5px;background:#f3f3f3;border-radius:3px"></div><div class="a" style="left:1154.35px;width:20px;text-align:center;top:687.20px;height:20px;line-height:20px;font-size:11px;color:#555">2</div><div class="a" style="left:1181px;top:687.5px;width:19.5px;height:19.5px;background:#f3f3f3;border-radius:3px"></div><div class="a" style="left:1180.75px;width:20px;text-align:center;top:687.20px;height:20px;line-height:20px;font-size:11px;color:#555">3</div><div class="a" style="left:1208px;top:687.5px;width:19.5px;height:19.5px;background:#f3f3f3;border-radius:3px"></div><div class="a" style="left:1207.75px;width:20px;text-align:center;top:687.20px;height:20px;line-height:20px;font-size:11px;color:#555">4</div><div class="a" style="left:1234.5px;top:687.5px;width:19.5px;height:19.5px;background:#f3f3f3;border-radius:3px"></div><div class="a" style="left:1234.25px;width:20px;text-align:center;top:687.20px;height:20px;line-height:20px;font-size:11px;color:#555">5</div><div class="a" style="left:1261px;top:687.5px;width:19.5px;height:19.5px;background:#f3f3f3;border-radius:3px"></div><div class="a" style="left:1260.75px;width:20px;text-align:center;top:687.20px;height:20px;line-height:20px;font-size:11px;color:#555">6</div><div class="a" style="left:1288px;top:687.5px;width:19.5px;height:19.5px;background:#f3f3f3;border-radius:3px"></div><svg class="a" style="left:1294.5px;top:692.5px;" width="7" height="10" viewBox="0 0 7 10" fill="none"><path d="M1.5 1 L5.5 5 L1.5 9" stroke="#666" stroke-width="1.2" stroke-linecap="round" stroke-linejoin="round"/></svg><div class="a" style="left:1321.4px;top:687.5px;width:70.6px;height:19.5px;background:#f3f3f3;border-radius:3px"></div><div class="a" style="left:1328px;top:687.20px;height:20px;line-height:20px;font-size:12px;color:#121212">10/page</div><svg class="a" style="left:1377px;top:694px;" width="10" height="7" viewBox="0 0 10 7" fill="none"><path d="M1.5 1.5 L5 5 L8.5 1.5" stroke="#121212" stroke-width="1.4" stroke-linecap="round" stroke-linejoin="round"/></svg><div class="a" style="left:477px;top:707px;width:919px;height:1px;background:#ebebeb"></div><div class="a" style="left:497.5px;top:729.00px;height:20px;line-height:20px;font-size:12.3px;color:#121212">0/100 products added</div><div class="a" style="left:1189px;top:721px;width:78px;height:36px;background:#f1f1f1;border-radius:4px"></div><div class="a" style="left:1189.00px;width:78px;text-align:center;top:729.00px;height:20px;line-height:20px;font-size:12.5px;color:#121212;-webkit-text-stroke:0.3px #121212">Cancel</div><div class="a" style="left:1277px;top:721px;width:115px;height:36px;background:#b1dfdf;border-radius:4px"></div><div class="a" style="left:1276.00px;width:117px;text-align:center;top:729.00px;height:20px;line-height:20px;font-size:12.5px;color:#fff;-webkit-text-stroke:0.3px #fff">Add products</div><div class="a" style="left:565px;top:201.5px;width:124px;height:37px;border:6px solid #e3191c"></div></body></html>
